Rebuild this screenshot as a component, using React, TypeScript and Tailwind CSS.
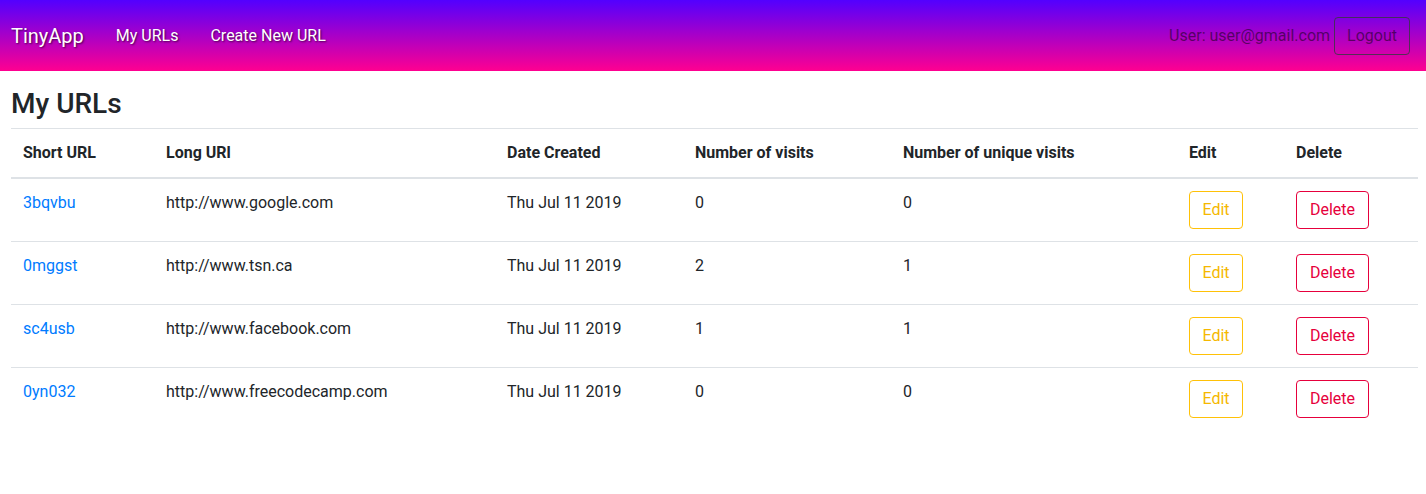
const urls = [
  { id: "3bqvbu", long: "http://www.google.com", date: "Thu Jul 11 2019", visits: 0, unique: 0 },
  { id: "0mggst", long: "http://www.tsn.ca", date: "Thu Jul 11 2019", visits: 2, unique: 1 },
  { id: "sc4usb", long: "http://www.facebook.com", date: "Thu Jul 11 2019", visits: 1, unique: 1 },
  { id: "0yn032", long: "http://www.freecodecamp.com", date: "Thu Jul 11 2019", visits: 0, unique: 0 },
];

const headers = [
  "Short URL",
  "Long URl",
  "Date Created",
  "Number of visits",
  "Number of unique visits",
  "Edit",
  "Delete",
];

export default function App() {
  return (
    <div className="min-h-[494px] bg-white text-[#212529] font-['Roboto',sans-serif]">
      {/* Navbar */}
      <nav className="h-[71px] flex items-center pl-[11px] pr-[16px] bg-linear-to-b/srgb from-[#5200ff] to-[#ff0090]">
        <span className="text-[20px] text-white [text-shadow:1px_1px_2px_rgba(0,0,0,0.6)] mr-[16px]">
          TinyApp
        </span>
        <a className="px-[16px] text-[16px] text-white [text-shadow:1px_1px_2px_rgba(0,0,0,0.6)]">
          My URLs
        </a>
        <a className="px-[16px] text-[16px] text-white [text-shadow:1px_1px_2px_rgba(0,0,0,0.6)]">
          Create New URL
        </a>
        <div className="ml-auto flex items-center">
          <span className="text-[16px] text-black/50">User: user@gmail.com</span>
          <button className="ml-[4px] h-[38px] px-[12px] rounded border border-[#343a40]/80 text-[16px] text-black/50">
            Logout
          </button>
        </div>
      </nav>

      <div className="px-[11px] pt-[16px]">
        <h3 className="text-[28px] leading-[33px] font-medium mb-[8px]">My URLs</h3>
        <table className="w-[1407px] table-fixed border-collapse text-[16px] leading-[24px]">
          <colgroup>
            <col className="w-[143px]" />
            <col className="w-[341px]" />
            <col className="w-[188px]" />
            <col className="w-[208px]" />
            <col className="w-[286px]" />
            <col className="w-[107px]" />
            <col className="w-[134px]" />
          </colgroup>
          <thead>
            <tr>
              {headers.map((h) => (
                <th
                  key={h}
                  className="text-left font-bold p-[12px] border-t border-[#dee2e6] border-b-2"
                >
                  {h}
                </th>
              ))}
            </tr>
          </thead>
          <tbody>
            {urls.map((u) => (
              <tr key={u.id} className="border-t border-[#dee2e6] align-top">
                <td className="p-[12px]">
                  <a className="text-[#007bff]">{u.id}</a>
                </td>
                <td className="p-[12px]">{u.long}</td>
                <td className="p-[12px]">{u.date}</td>
                <td className="p-[12px]">{u.visits}</td>
                <td className="p-[12px]">{u.unique}</td>
                <td className="p-[12px]">
                  <button className="h-[38px] w-[54px] rounded border border-[#ffc107] text-[#f5b800]">
                    Edit
                  </button>
                </td>
                <td className="p-[12px]">
                  <button className="h-[38px] w-[73px] rounded border border-[#e6003c] text-[#e6003c]">
                    Delete
                  </button>
                </td>
              </tr>
            ))}
          </tbody>
        </table>
      </div>
    </div>
  );
}
